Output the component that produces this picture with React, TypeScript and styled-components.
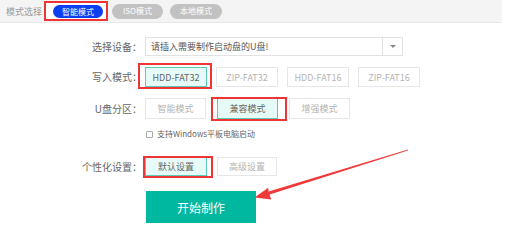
import styled, { createGlobalStyle } from 'styled-components';

const GlobalStyle = createGlobalStyle`
  html, body {
    margin: 0;
    padding: 0;
    background: #fff;
  }
  body {
    font-family: "Noto Sans CJK SC", "Noto Sans", sans-serif;
  }
`;

const Page = styled.div`
  position: relative;
  width: 507px;
  height: 242px;
  overflow: hidden;
`;

// Top mode bar

const TopBar = styled.div`
  width: 502px;
  height: 23px;
  box-sizing: border-box;
  display: flex;
  align-items: center;
  padding-left: 6px;
  background: #f4f4f4;
  border-bottom: 1px solid #e8e8e8;
`;

const BarLabel = styled.span`
  font-size: 9px;
  line-height: 1;
  color: #9a9a9a;
  margin-right: 2px;
`;

const TabMark = styled.div`
  display: flex;
  padding: 2px 3px 1px 7px;
  background: #fff;
  border: 2px solid #ee3535;
  margin-right: 4px;
`;

const Pill = styled.span<{ $active?: boolean; $w: number }>`
  display: flex;
  align-items: center;
  justify-content: center;
  width: ${(p) => p.$w}px;
  height: ${(p) => (p.$active ? 13 : 15)}px;
  border-radius: 8px;
  font-size: 8px;
  line-height: 1;
  color: #fff;
  background: ${(p) => (p.$active ? '#0c3ff0' : '#c2c2c2')};
  margin-right: ${(p) => (p.$active ? 0 : 7)}px;
`;

// Form

const Form = styled.div`
  display: flex;
  flex-direction: column;
`;

const Row = styled.div<{ $top: number; $h: number }>`
  display: flex;
  align-items: center;
  margin-top: ${(p) => p.$top}px;
  height: ${(p) => p.$h}px;
`;

const Label = styled.span`
  width: 142px;
  margin-right: 3px;
  text-align: right;
  font-size: 10px;
  line-height: 1;
  color: #666;
`;

const Select = styled.div`
  display: flex;
  width: 258px;
  height: 19px;
  box-sizing: border-box;
  border: 1px solid #e2e2e2;
`;

const SelectText = styled.span`
  flex: 1;
  display: flex;
  align-items: center;
  padding-left: 5px;
  font-size: 9px;
  color: #555;
`;

const Caret = styled.span`
  width: 19px;
  display: flex;
  align-items: center;
  justify-content: center;
  border-left: 1px solid #e2e2e2;
  &::before {
    content: '';
    border-left: 3px solid transparent;
    border-right: 3px solid transparent;
    border-top: 3px solid #888;
  }
`;

const Options = styled.div<{ $gap: number }>`
  display: flex;
  gap: ${(p) => p.$gap}px;
`;

const Option = styled.span<{ $w: number; $h: number; $on?: boolean; $mark?: string }>`
  position: relative;
  display: flex;
  align-items: center;
  justify-content: center;
  box-sizing: border-box;
  width: ${(p) => p.$w}px;
  height: ${(p) => p.$h}px;
  font-size: 9px;
  line-height: 1;
  color: ${(p) => (p.$on ? '#666' : '#b4b4b4')};
  background: ${(p) => (p.$on ? '#e6fbf7' : '#fff')};
  border: 1px solid ${(p) => (p.$on ? '#5ccab5' : '#e6e6e6')};
  &::after {
    content: '';
    display: ${(p) => (p.$mark ? 'block' : 'none')};
    position: absolute;
    inset: ${(p) => p.$mark || '0'};
    border: 2px solid #ee3535;
  }
`;

const CheckLine = styled.label`
  display: flex;
  align-items: center;
  margin-left: 146px;
  font-size: 8px;
  line-height: 1;
  color: #666;
`;

const CheckBox = styled.span`
  width: 7px;
  height: 7px;
  box-sizing: border-box;
  border: 1px solid #aaa;
  border-radius: 1px;
  margin-right: 4px;
`;

const StartButton = styled.button`
  margin-left: 146px;
  width: 110px;
  height: 32px;
  border: none;
  padding: 0;
  background: #00b89f;
  color: #fff;
  font-family: inherit;
  font-size: 12px;
`;

const ArrowLayer = styled.svg`
  position: absolute;
  left: 0;
  top: 0;
  pointer-events: none;
`;

export default function App() {
  return (
    <Page>
      <GlobalStyle />
      <TopBar>
        <BarLabel>模式选择</BarLabel>
        <TabMark>
          <Pill $active $w={50}>智能模式</Pill>
        </TabMark>
        <Pill $w={51}>ISO模式</Pill>
        <Pill $w={52}>本地模式</Pill>
      </TopBar>

      <Form>
        <Row $top={14} $h={19}>
          <Label>选择设备：</Label>
          <Select>
            <SelectText>请插入需要制作启动盘的U盘!</SelectText>
            <Caret />
          </Select>
        </Row>

        <Row $top={11} $h={20}>
          <Label>写入模式：</Label>
          <Options $gap={9}>
            <Option $w={62} $h={20} $on $mark="-5px -6px -3px -8px">HDD-FAT32</Option>
            <Option $w={62} $h={20}>ZIP-FAT32</Option>
            <Option $w={62} $h={20}>HDD-FAT16</Option>
            <Option $w={62} $h={20}>ZIP-FAT16</Option>
          </Options>
        </Row>

        <Row $top={11} $h={21}>
          <Label>U盘分区：</Label>
          <Options $gap={11}>
            <Option $w={61} $h={21}>智能模式</Option>
            <Option $w={61} $h={21} $on $mark="-2px -10px -3px -7px">兼容模式</Option>
            <Option $w={61} $h={21}>增强模式</Option>
          </Options>
        </Row>

        <Row $top={9} $h={12}>
          <CheckLine>
            <CheckBox />
            支持Windows平板电脑启动
          </CheckLine>
        </Row>

        <Row $top={17} $h={19}>
          <Label>个性化设置：</Label>
          <Options $gap={10}>
            <Option $w={62} $h={19} $on $mark="-2px -7px -3px -3px">默认设置</Option>
            <Option $w={60} $h={19}>高级设置</Option>
          </Options>
        </Row>

        <Row $top={15} $h={32}>
          <StartButton>开始制作</StartButton>
        </Row>
      </Form>

      <ArrowLayer width={507} height={242} viewBox="0 0 507 242">
        <polygon
          fill="#f03a3a"
          points="408.1,149.6 407.9,150.4 269.6,194.6 271.2,199.4 254.5,197.5 268.2,187.8 268.6,191.4"
        />
      </ArrowLayer>
    </Page>
  );
}
